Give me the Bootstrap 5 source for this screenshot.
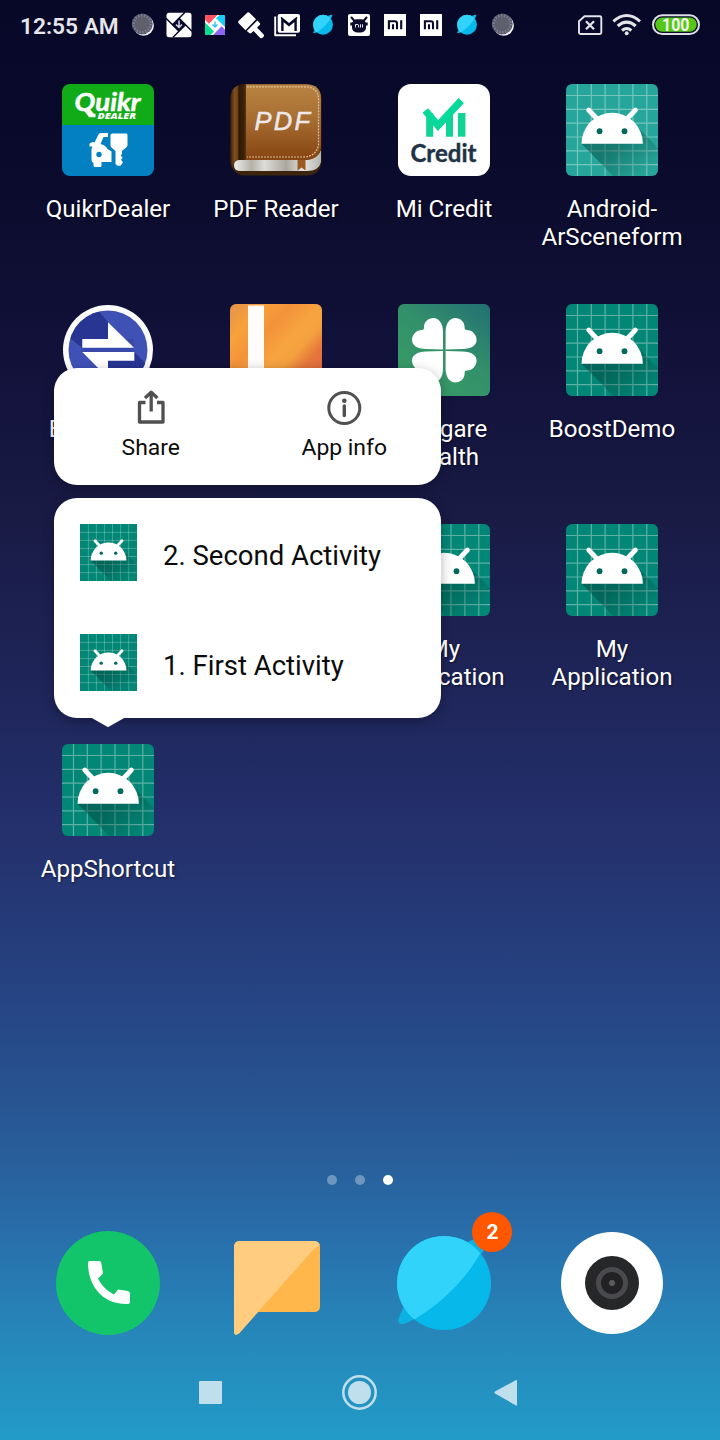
<!DOCTYPE html>
<html lang="en">
<head>
<meta charset="utf-8">
<meta name="viewport" content="width=device-width, initial-scale=1">
<title>Home screen</title>
<link href="https://cdn.jsdelivr.net/npm/bootstrap@5.3.0/dist/css/bootstrap.min.css" rel="stylesheet">
<style>
body{font-family:Roboto,"Noto Sans",sans-serif;margin:0}
.phone{width:720px;height:1440px;background:linear-gradient(180deg,#070828 0,#0b0c2d 200px,#11113a 350px,#191b45 520px,#1f265b 700px,#24326f 850px,#264483 1000px,#285d99 1150px,#2872ae 1250px,#2688ba 1340px,#229bc8 1440px)}
.statusbar{height:50px}
.clock{width:125px;padding-left:20px;font-size:22.7px;font-weight:600;color:#e6e6ea;line-height:52px;padding-top:3px}
.launcher{margin:34px 24px 0;display:grid;grid-template-columns:repeat(4,168px);grid-auto-rows:220px}
.app-icon{width:92px;height:92px}
.app-label{margin-top:19px;font-size:24.1px;line-height:28px;color:#fff;text-shadow:1px 1px 2px rgba(0,0,0,.5);white-space:nowrap}
.pager{margin-top:211px;gap:18px}
.pager span{width:10px;height:10px;background:#fff}
.pager .off{background:rgba(255,255,255,.33)}
.dock{margin:46px 24px 0}
.dock>div{width:168px}
.dock svg{width:104px;height:104px;overflow:visible}
.count{width:40px;height:40px;left:112px;top:-19px;background:#ff5600;color:#fff;font-weight:700;font-size:21px;line-height:41px;padding-left:1px}
.sysnav{height:56px;margin-top:29px}
.shortcuts{left:54px;top:368px;width:387px;gap:13px}
.panel{background:#fff;border-radius:23px;box-shadow:0 3px 12px rgba(0,0,0,.3)}
.actions{height:117px}
.act{font-size:22.9px;line-height:28px;color:#0c0c0c;padding-top:20px}
.act-name{margin-top:6px}
.entry{height:110px;padding-left:26px;padding-bottom:1px;gap:26px;font-size:27.5px;color:#0c0c0c}
.entry svg{width:57px;height:57px}
.entry-name{padding-top:6px}
.tip{left:36px;top:219px}
</style>
</head>
<body>
<svg width="0" height="0" class="position-absolute" aria-hidden="true">
<defs>
<linearGradient id="fade" x1="0.1" y1="0.1" x2="0.85" y2="0.75"><stop offset="0" stop-color="#003c34" stop-opacity=".45"/><stop offset=".4" stop-color="#003c34" stop-opacity=".42"/><stop offset="1" stop-color="#003c34" stop-opacity="0"/></linearGradient>
<clipPath id="globe"><circle cx="52" cy="52" r="47"/></clipPath>
<symbol id="droid" overflow="visible">
<path d="M11.5-4v104M25.3-4v104M39.1-4v104M53-4v104M66.9-4v104M80.8-4v104M-4 11.5H100M-4 25.3H100M-4 39.1H100M-4 53H100M-4 66.8H100M-4 80.7H100" stroke="#fff" stroke-opacity=".36" stroke-width="1.2"/>
<path d="M15.5 59.7L54 99H100V72L69 41Z" fill="url(#fade)"/>
<path d="M15.5 59.7a30.7 30.9 0 0 1 61.4 0Z" fill="#fff"/>
<path d="M22.7 26l9 9.5M69.4 26l-9 9.5" stroke="#fff" stroke-width="4.8" stroke-linecap="round"/>
<circle cx="33.6" cy="47.2" r="2.9" fill="#00695c"/><circle cx="58.5" cy="47.2" r="2.9" fill="#00695c"/>
</symbol>
<symbol id="planet" viewBox="0 0 104 104" overflow="visible">
<path d="M12 76C6 87 5 91 8 92.5C11 94 17 91 24 87L90 22C96 13 97 8 95 6C91 4 84 7 76 11Z" fill="#0bb3e4"/>
<circle cx="52" cy="52" r="47" fill="#07b9ea"/>
<path clip-path="url(#globe)" d="M18 91L0 80V0H85L93 14L88.3 22C74 49 46 75 22.3 88.3Z" fill="#31d3fb"/>
</symbol>
<symbol id="disc" viewBox="0 0 36 36"><circle cx="18.6" cy="18.4" r="10.3" fill="#f4f4f6"/><circle cx="17.2" cy="16.9" r="10.5" fill="#5b5b6e"/><circle cx="17.2" cy="16.9" r="8.3" fill="none" stroke="#85859a" stroke-width="2.4" stroke-dasharray="1.2 1.7"/><circle cx="17" cy="16.7" r="6.9" fill="#5f5f6e"/></symbol>
<symbol id="mi" viewBox="0 0 36 36"><path d="M7 7h22v22H7z" fill="#fff"/><path d="M11.9 22.2V14.3H17.8Q20 14.3 20 16.5V22.2M16 17.2V22.2M24.2 13.2V22.2" fill="none" stroke="#08092b" stroke-width="2.1"/></symbol>
</defs></svg>

<div class="phone position-relative overflow-hidden d-flex flex-column">
 <header class="statusbar d-flex align-items-center">
  <div class="clock flex-shrink-0 text-nowrap">12:55 AM</div>
  <svg width="36" height="36"><use href="#disc"/></svg>
  <svg width="36" height="36" viewBox="0 0 36 36"><rect x="5.5" y="5.7" width="25" height="24.5" rx="2.5" fill="#fff"/><path d="M18 11.2l6.5 6.5-6.5 6.5-6.5-6.5zM11.5 17.7L24 5.2M18 24.2L5 11.2M24.5 17.7L12 30.2M18 11.2L31 24.2" fill="#08092b" stroke="#08092b" stroke-width="1.5"/><path d="M18 13.5v6M15 17.5l3 3 3-3" fill="none" stroke="#d9d9e2" stroke-width="1.5"/></svg>
  <svg width="36" height="36" viewBox="0 0 36 36"><rect x="8" y="8" width="20" height="20" rx="1.5" fill="#fff"/><path d="M8 13V9.500Q8 8 9.500 8H20.500L12 16.700z" fill="#ff5263"/><path d="M22.500 8H26.500Q28 8 28 9.500V20L19 11.300z" fill="#14cdf8"/><path d="M28 22.500V26.500Q28 28 26.500 28H16L24.500 19.200z" fill="#8c66f5"/><path d="M8 15.500L17 24.500L13.500 28H9.500Q8 28 8 26.500z" fill="#05de93"/><path d="M18 14.500v5.500M15.500 17.500l2.500 2.500 2.500-2.500" fill="none" stroke="#28c6ee" stroke-width="1.4"/></svg>
  <svg width="36" height="36" viewBox="0 0 36 36" fill="#fff"><path d="M14.500 5.600q1-.8 2 .1l6.500 6.500-10.500 11L5.500 16q-1-1 0-2z"/><path d="M24.300 13.500l2.500 2.500q.8 1 0 2L24 20.500l6.700 7q.8 1.500-.6 2.800t-2.800.6L20.500 24l-2.200 2q-1 .8-2 0L13.800 24z"/></svg>
  <svg width="36" height="36" viewBox="0 0 36 36"><path d="M6.200 9.500V28.200H27" fill="none" stroke="#fff" stroke-width="1.9" stroke-linejoin="round"/><rect x="8.700" y="7" width="22.300" height="18.700" rx="2" fill="#fff"/><path d="M13.400 24V12.500L20 18L26.600 12.500V24" fill="none" stroke="#08092b" stroke-width="2.4"/><path d="M12 10.500L20 17l8-6.500" fill="none" stroke="#08092b" stroke-width="1.6"/></svg>
  <svg width="36" height="36" viewBox="0 0 36 36"><svg x="7" y="6.700" width="22" height="22"><use href="#planet"/></svg></svg>
  <svg width="36" height="36" viewBox="0 0 36 36"><rect x="7" y="7" width="22" height="22" rx="2" fill="#fff"/><path d="M10.500 10.500l3 3.500M25.500 10.500l-3 3.500" stroke="#08092b" stroke-width="2" stroke-linecap="round"/><path d="M9.300 15.500h17.400v3H9.300z" fill="#08092b"/><rect x="11" y="12.300" width="14" height="13.200" rx="5" fill="#08092b"/><path d="M14.500 20.500v-3h2.300q.8 0 .8 1v2M19.500 17.300v3.200M21.500 17.300v3.200" fill="none" stroke="#fff" stroke-width=".9"/></svg>
  <svg width="36" height="36"><use href="#mi"/></svg>
  <svg width="36" height="36"><use href="#mi"/></svg>
  <svg width="36" height="36" viewBox="0 0 36 36"><svg x="7" y="6.700" width="22" height="22"><use href="#planet"/></svg></svg>
  <svg width="36" height="36"><use href="#disc"/></svg>
  <svg class="ms-auto" width="143" height="36" viewBox="0 0 143 36">
   <path d="M7.500 9.200H22.800Q24.300 9.200 24.300 10.700V25.500Q24.300 27 22.800 27H3.500Q2 27 2 25.500V14.300Z" fill="none" stroke="#e4e4e9" stroke-width="1.9" stroke-linejoin="round"/>
   <path d="M9 14.200l8 8M17 14.200l-8 8" stroke="#e4e4e9" stroke-width="2.3"/>
   <path d="M36.400 14.300Q49.700 2.700 63 14.300M40.700 19Q49.700 11.200 58.700 19M45 23.500Q49.700 19.600 54.400 23.500" fill="none" stroke="#e4e4e9" stroke-width="3"/><circle cx="49.700" cy="26.300" r="2" fill="#e4e4e9"/>
   <rect x="76" y="8.200" width="46" height="18.900" rx="9.400" fill="#08092b" stroke="#dedee5" stroke-width="2"/>
   <rect x="78.300" y="10.500" width="41.400" height="14.300" rx="7.100" fill="#55c716"/>
   <text x="85" y="24.100" font-size="18.300" font-weight="700" fill="#f2f5ee" textLength="27.500" lengthAdjust="spacingAndGlyphs">100</text>
  </svg>
 </header>

 <main class="launcher text-center">
  <div>
   <svg class="app-icon" viewBox="0 0 92 92"><clipPath id="r1"><rect width="92" height="92" rx="8"/></clipPath><g clip-path="url(#r1)"><path d="M0 0h92v41H0z" fill="#12ab18"/><path d="M0 41h92v51H0z" fill="#0380c2"/></g>
    <text x="12.500" y="26.500" font-family="Lato" font-weight="700" font-style="italic" font-size="25" fill="#fff" stroke="#fff" stroke-width=".5" textLength="66" lengthAdjust="spacingAndGlyphs">Quikr</text>
    <path d="M23 25l5 6.500h5.500" fill="none" stroke="#fff" stroke-width="3.600"/>
    <text x="35.500" y="34.700" font-family="Open Sans" font-weight="800" font-style="italic" font-size="8" fill="#fff" textLength="38.500" lengthAdjust="spacingAndGlyphs">DEALER</text>
    <g fill="#fff"><path d="M36.500 50.500q.7-1.500 2.500-1.500h7v4h-4.500l-3 7q5 1 7 5l4 2.500V78H39.500v3.500q0 1.500-1.500 1.500h-5q-1.500 0-1.500-1.500V79q-2-1-2-4V65l1-2.500h-3v-3l3-1.500 2 .5z"/><path d="M50.500 49.500h13.500q1.500 0 1.500 1.500v10q0 1.300-1 2.300l-4.500 3.400v3l-1.300 1.800 2 2.300-1.700 2 2 2.500-2.500 3.500h-3L53.500 80V67l-4-3.500q-1-1-1-2.500V51q0-1.500 2-1.500z"/></g><circle cx="37" cy="70.500" r="2.700" fill="#0380c2"/></svg>
   <div class="app-label">QuikrDealer</div>
  </div>
  <div>
   <svg class="app-icon" viewBox="0 0 92 92"><defs><linearGradient id="lea" x1="0" y1="0" x2="0" y2="1"><stop offset="0" stop-color="#b98442"/><stop offset=".45" stop-color="#a76e33"/><stop offset="1" stop-color="#864411"/></linearGradient><linearGradient id="spi"><stop offset="0" stop-color="#402508"/><stop offset=".25" stop-color="#84511f"/><stop offset=".42" stop-color="#6b3f15"/><stop offset=".5" stop-color="#2f1a06"/><stop offset=".8" stop-color="#3b2108"/><stop offset="1" stop-color="#6a3f15"/></linearGradient><linearGradient id="pgs"><stop offset="0" stop-color="#eee"/><stop offset=".2" stop-color="#b4b2a8"/><stop offset=".35" stop-color="#deddd8"/><stop offset=".6" stop-color="#aaa89e"/><stop offset=".8" stop-color="#e5e5e2"/><stop offset="1" stop-color="#b5b4ae"/></linearGradient></defs>
    <rect x=".5" y=".5" width="91" height="91" rx="14" fill="#3d240c"/>
    <path d="M.8 14Q.8.300 15 .300H17V76H10Q3 76 3 84Q.8 80 .8 76Z" fill="url(#spi)"/>
    <path d="M10 76H76Q88 75 91 66V78Q89 87 77 87H11Q4 87 4 81.500Q4 76 10 76Z" fill="url(#pgs)"/>
    <path d="M16 .300H76Q91 .300 91 15V63Q89 76 74 76H16Z" fill="url(#lea)"/>
    <path d="M17 2.800H75Q88.500 3 88.500 16V61Q86 73 73 73H17" fill="none" stroke="#dfc7a2" stroke-width="1.200" stroke-dasharray="1.800 1.200"/>
    <path d="M67.500 76h8V86.500l-4-3-4 3z" fill="#9b5a20"/>
    <text x="24.500" y="46" font-family="Liberation Sans" font-style="italic" font-size="25.500" fill="#eee8ea" stroke="#eee8ea" stroke-width=".5" textLength="55.500">PDF</text></svg>
   <div class="app-label">PDF Reader</div>
  </div>
  <div>
   <svg class="app-icon" viewBox="0 0 92 92"><rect width="92" height="92" rx="13" fill="#fff"/><path d="M31.700 29v23.700M51.500 29v23.700" stroke="#12d397" stroke-width="7"/><path d="M28.200 32l12 14.500 2-3.500-10-9z" fill="#05b487"/><path d="M63.700 29v23.700" stroke="#12d397" stroke-width="7.500"/><path d="M27.300 26.500L40 41.500L63.300 16.500" fill="none" stroke="#06d999" stroke-width="7.300"/>
    <text x="12.500" y="78.300" font-family="Lato" font-weight="700" font-size="25" fill="#203244" stroke="#203244" stroke-width=".4" textLength="66" lengthAdjust="spacingAndGlyphs">Credit</text></svg>
   <div class="app-label">Mi Credit</div>
  </div>
  <div>
   <svg class="app-icon rounded-2" viewBox="0 0 92 92"><path d="M0 0h92v92H0z" fill="#26a69a"/><use href="#droid"/></svg>
   <div class="app-label">Android-<br>ArSceneform</div>
  </div>

  <div>
   <svg class="app-icon" viewBox="0 0 92 92"><clipPath id="c2"><circle cx="46" cy="46" r="39.500"/></clipPath><circle cx="46" cy="46" r="45" fill="#fbfbfb"/><g clip-path="url(#c2)"><path d="M0 0h92v92H0z" fill="#3f51b5"/><path d="M34 4L46 18.300V35L20.300 43.700L5 32V0ZM72.300 48L92 68V92H46V56.700Z" fill="#283593"/><path d="M20 35H72V48H20z" fill="#3949ab"/></g><path d="M20.300 35H46V18.300L72 43.700H20.300ZM20.300 48H72.300V56.700H46V74Z" fill="#fff"/></svg>
   <div class="app-label">ExchangeIt</div>
  </div>
  <div>
   <svg class="app-icon rounded-2" viewBox="0 0 92 92"><defs><linearGradient id="org" x1="0" y1="0" x2="1" y2=".9"><stop offset="0" stop-color="#e2914b"/><stop offset=".2" stop-color="#f7a23b"/><stop offset=".37" stop-color="#f4923a"/><stop offset=".55" stop-color="#f6a440"/><stop offset=".66" stop-color="#f4a03f"/><stop offset=".78" stop-color="#e6763c"/><stop offset="1" stop-color="#d9603c"/></linearGradient></defs><path d="M0 0h92v92H0z" fill="url(#org)"/><path d="M18 1.500h16V92H18z" fill="#fdfcfa"/></svg>
  </div>
  <div>
   <svg class="app-icon rounded-2" viewBox="0 0 92 92"><defs><linearGradient id="grn" x1=".3" y1=".9" x2="1" y2="0"><stop offset="0" stop-color="#379a67"/><stop offset=".45" stop-color="#33906a"/><stop offset="1" stop-color="#226f74"/></linearGradient><path id="leaf" d="M45 45.500L45 28C45 19 40.500 14 35.500 14C30 14 26 18 26 23V24Q26 26 24 26C18 26 14 31 14 36C14 41 19 45 28 45Z"/></defs><path d="M0 0h92v92H0z" fill="url(#grn)"/><g fill="#fff"><use href="#leaf"/><use href="#leaf" transform="matrix(-1 0 0 1 92.600 0)"/><use href="#leaf" transform="matrix(1 0 0 -1 0 92.600)"/><use href="#leaf" transform="matrix(-1 0 0 -1 92.600 92.600)"/></g></svg>
   <div class="app-label">Religare<br>Health</div>
  </div>
  <div>
   <svg class="app-icon rounded-2" viewBox="0 0 92 92"><path d="M0 0h92v92H0z" fill="#028676"/><use href="#droid"/></svg>
   <div class="app-label">BoostDemo</div>
  </div>

  <div></div>
  <div></div>
  <div>
   <svg class="app-icon rounded-2" viewBox="0 0 92 92"><path d="M0 0h92v92H0z" fill="#028676"/><use href="#droid"/></svg>
   <div class="app-label">My<br>Application</div>
  </div>
  <div>
   <svg class="app-icon rounded-2" viewBox="0 0 92 92"><path d="M0 0h92v92H0z" fill="#028676"/><use href="#droid"/></svg>
   <div class="app-label">My<br>Application</div>
  </div>

  <div>
   <svg class="app-icon rounded-2" viewBox="0 0 92 92"><path d="M0 0h92v92H0z" fill="#028676"/><use href="#droid"/></svg>
   <div class="app-label">AppShortcut</div>
  </div>
 </main>

 <div class="pager d-flex justify-content-center"><span class="rounded-circle off"></span><span class="rounded-circle off"></span><span class="rounded-circle"></span></div>

 <footer class="dock d-flex text-center">
  <div><svg viewBox="0 0 104 104"><circle cx="52" cy="52" r="52" fill="#12c56a"/><path d="M34 30H43Q45 30 45.300 32L47 42.500L42 47.500C46 55 51 60 58 63.500L62 58.500L72 60Q74 60.500 74 62.500V71Q74 73 72 73C47 74 32 55 32 32Q32 30 34 30Z" fill="#fff"/></svg></div>
  <div><svg viewBox="0 0 104 104"><path d="M16 10H90Q96 10 96 16V75Q96 81 90 81H34L15 102.500Q12 104.500 10.500 103Q10 102.500 10 101V16Q10 10 16 10Z" fill="#ffb74b"/><path d="M16 10H90Q94 10 96 14Q92 15.500 88 20L34 81L15 102.500Q12 104.500 10.500 103Q10 102.500 10 101V16Q10 10 16 10Z" fill="#ffcc80"/></svg></div>
  <div class="position-relative"><svg viewBox="0 0 104 104"><use href="#planet"/></svg><span class="count position-absolute rounded-circle">2</span></div>
  <div><svg viewBox="0 0 104 104"><circle cx="52" cy="52" r="51" fill="#fff"/><circle cx="52" cy="52" r="27" fill="#262729"/><circle cx="52" cy="52" r="13.500" fill="#222224" stroke="#4a4a4e" stroke-width="5"/><circle cx="52" cy="52" r="3" fill="#5b5b5e"/></svg></div>
 </footer>

 <nav class="sysnav d-flex justify-content-center">
  <svg width="330" height="56" viewBox="195 1364 330 56" fill="#c0dfec"><rect x="199" y="1381" width="23" height="23" rx="1"/><circle cx="359.500" cy="1392.500" r="11.500"/><circle cx="359.500" cy="1392.500" r="16.200" fill="none" stroke="#c0dfec" stroke-width="2.500"/><path d="M495 1391.500L516 1380Q517 1379.600 517 1380.700V1404.500Q517 1406 516 1405.500L495 1393.500Q494 1392.500 495 1391.500Z"/></svg>
 </nav>

 <aside class="shortcuts position-absolute d-flex flex-column">
  <div class="panel actions d-flex text-center">
   <div class="act w-50"><svg class="d-block mx-auto" width="40" height="40" viewBox="0 0 40 40" fill="none" stroke="#505050" stroke-width="3.300" stroke-linejoin="round"><path d="M14.500 14.500H8.500V34H32V14.500H26" /><path d="M20.200 23.500V5M14 10L20.200 4.200L26.400 10"/></svg><div class="act-name">Share</div></div>
   <div class="act w-50"><svg class="d-block mx-auto" width="40" height="40" viewBox="0 0 40 40"><circle cx="20.300" cy="20" r="15.500" fill="none" stroke="#505050" stroke-width="3"/><path d="M20.300 18V27.500" stroke="#505050" stroke-width="3.400" stroke-linecap="round"/><circle cx="20.300" cy="12.800" r="2.300" fill="#505050"/></svg><div class="act-name">App info</div></div>
  </div>
  <div class="panel position-relative">
   <div class="entry d-flex align-items-center"><svg viewBox="-2.900 -2.900 98 98"><path d="M-3-3h99v99H-3z" fill="#028676"/><use href="#droid"/></svg><span class="entry-name">2. Second Activity</span></div>
   <div class="entry d-flex align-items-center"><svg viewBox="-2.900 -2.900 98 98"><path d="M-3-3h99v99H-3z" fill="#028676"/><use href="#droid"/></svg><span class="entry-name">1. First Activity</span></div>
   <svg class="tip position-absolute" width="36" height="11" viewBox="0 0 36 11"><path d="M0 0H36L18.700 9.800Q18 10.200 17.300 9.800Z" fill="#fff"/></svg>
  </div>
 </aside>
</div>
<script src="https://cdn.jsdelivr.net/npm/bootstrap@5.3.0/dist/js/bootstrap.bundle.min.js"></script>
</body>
</html>
